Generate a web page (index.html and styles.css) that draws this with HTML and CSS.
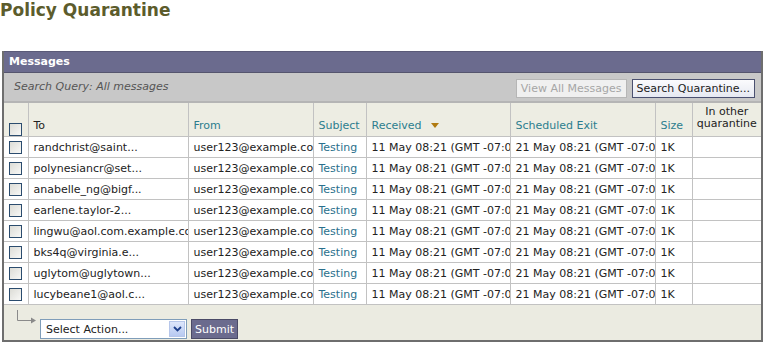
FILE: index.html
```html
<!DOCTYPE html>
<html lang="en">
<head>
    <meta charset="UTF-8">
    <title>Policy Quarantine</title>
    <link rel="stylesheet" href="styles.css">
</head>
<body>
    <h1 class="page-title">Policy Quarantine</h1>

    <div class="panel">
        <div class="panel-head">Messages</div>
        <div class="search-bar">
            <span class="search-query">Search Query: All messages</span>
            <div class="search-buttons">
                <button class="btn btn-disabled" disabled>View All Messages</button>
                <button class="btn">Search Quarantine...</button>
            </div>
        </div>

        <table class="msg-table">
            <colgroup>
                <col class="c-check">
                <col class="c-to">
                <col class="c-from">
                <col class="c-subject">
                <col class="c-received">
                <col class="c-exit">
                <col class="c-size">
                <col class="c-other">
            </colgroup>
            <thead>
                <tr>
                    <th><input type="checkbox" class="cb"></th>
                    <th class="plain">To</th>
                    <th>From</th>
                    <th>Subject</th>
                    <th>Received <span class="sort-arrow"></span></th>
                    <th>Scheduled Exit</th>
                    <th>Size</th>
                    <th class="other">In other quarantine</th>
                </tr>
            </thead>
            <tbody>
                <tr><td><input type="checkbox" class="cb"></td><td>randchrist@saint...</td><td>user123@example.com</td><td><a href="#">Testing</a></td><td>11 May 08:21 (GMT -07:00)</td><td>21 May 08:21 (GMT -07:00)</td><td>1K</td><td></td></tr>
                <tr><td><input type="checkbox" class="cb"></td><td>polynesiancr@set...</td><td>user123@example.com</td><td><a href="#">Testing</a></td><td>11 May 08:21 (GMT -07:00)</td><td>21 May 08:21 (GMT -07:00)</td><td>1K</td><td></td></tr>
                <tr><td><input type="checkbox" class="cb"></td><td>anabelle_ng@bigf...</td><td>user123@example.com</td><td><a href="#">Testing</a></td><td>11 May 08:21 (GMT -07:00)</td><td>21 May 08:21 (GMT -07:00)</td><td>1K</td><td></td></tr>
                <tr><td><input type="checkbox" class="cb"></td><td>earlene.taylor-2...</td><td>user123@example.com</td><td><a href="#">Testing</a></td><td>11 May 08:21 (GMT -07:00)</td><td>21 May 08:21 (GMT -07:00)</td><td>1K</td><td></td></tr>
                <tr><td><input type="checkbox" class="cb"></td><td>lingwu@aol.com.example.com</td><td>user123@example.com</td><td><a href="#">Testing</a></td><td>11 May 08:21 (GMT -07:00)</td><td>21 May 08:21 (GMT -07:00)</td><td>1K</td><td></td></tr>
                <tr><td><input type="checkbox" class="cb"></td><td>bks4q@virginia.e...</td><td>user123@example.com</td><td><a href="#">Testing</a></td><td>11 May 08:21 (GMT -07:00)</td><td>21 May 08:21 (GMT -07:00)</td><td>1K</td><td></td></tr>
                <tr><td><input type="checkbox" class="cb"></td><td>uglytom@uglytown...</td><td>user123@example.com</td><td><a href="#">Testing</a></td><td>11 May 08:21 (GMT -07:00)</td><td>21 May 08:21 (GMT -07:00)</td><td>1K</td><td></td></tr>
                <tr><td><input type="checkbox" class="cb"></td><td>lucybeane1@aol.c...</td><td>user123@example.com</td><td><a href="#">Testing</a></td><td>11 May 08:21 (GMT -07:00)</td><td>21 May 08:21 (GMT -07:00)</td><td>1K</td><td></td></tr>
            </tbody>
        </table>

        <div class="panel-foot">
            <svg class="corner-arrow" width="22" height="14" viewBox="0 0 22 14">
                <path d="M1.5 0 V10.5 H16" fill="none" stroke="#8a8a8a" stroke-width="1"/>
                <path d="M15 7.5 L20 10.5 L15 13.5 Z" fill="#8a8a8a"/>
            </svg>
            <div class="select-box">
                <span>Select Action...</span>
                <span class="select-arrow">
                    <svg width="9" height="6" viewBox="0 0 9 6"><path d="M1 1 L4.5 4.5 L8 1" fill="none" stroke="#1d3f8c" stroke-width="1.8"/></svg>
                </span>
            </div>
            <button class="submit-btn">Submit</button>
        </div>
    </div>
</body>
</html>
```

FILE: styles.css
```css
body {
    margin: 0;
    font-family: "DejaVu Sans", Verdana, sans-serif;
    font-size: 11px;
    color: #222;
    background: #fff;
}

.page-title {
    margin: 0;
    padding: 1px 0 0 0;
    height: 51px;
    box-sizing: border-box;
    font-size: 17px;
    line-height: 18px;
    font-weight: bold;
    color: #5c5c2c;
}

.panel {
    margin: 0 2px;
    border: 2px solid #6e6e6e;
    border-top: none;
    width: 757px;
}

.panel-head {
    height: 20px;
    line-height: 20px;
    padding-left: 5px;
    background: #6b6b8e;
    color: #fff;
    font-weight: bold;
    border-top: 1px solid #5a5a78;
    border-bottom: 1px solid #55556e;
}

.search-bar {
    display: flex;
    justify-content: space-between;
    align-items: center;
    height: 28px;
    padding: 0 6px 0 10px;
    background: #c8c8c8;
}

.search-query {
    font-style: italic;
    color: #555;
    position: relative;
    top: -1px;
}

.search-buttons {
    display: flex;
    gap: 5px;
    padding-top: 3px;
}

.btn {
    font-family: "DejaVu Sans", Verdana, sans-serif;
    font-size: 11px;
    height: 19px;
    padding: 0 4px;
    background: linear-gradient(#fbfbfd, #e6e9f2);
    border: 1px solid #4a5070;
    color: #222;
}

.btn-disabled {
    color: #a6a6a6;
    border-color: #b6b6b6;
    background: #f0f0f0;
}

.msg-table {
    width: 757px;
    table-layout: fixed;
    border-collapse: collapse;
    border-top: 2px solid #b5b5b5;
    font-size: 11px;
}

.c-check { width: 24px; }
.c-to { width: 160px; }
.c-from { width: 125px; }
.c-subject { width: 53px; }
.c-received { width: 144px; }
.c-exit { width: 145px; }
.c-size { width: 37px; }
.c-other { width: 69px; }

.msg-table th,
.msg-table td {
    border: 1px solid #c2c2c2;
    white-space: nowrap;
    overflow: hidden;
    text-align: left;
    font-weight: normal;
    padding: 0 5px;
}

.msg-table th:first-child,
.msg-table td:first-child {
    border-left: none;
    padding: 0 0 0 5px;
}

.msg-table th:last-child,
.msg-table td:last-child {
    border-right: none;
}

.msg-table th {
    height: 29px;
    background: #ededE3;
    color: #2c7d8e;
    vertical-align: bottom;
    padding-bottom: 4px;
}

.msg-table th.plain {
    color: #222;
}

.msg-table th.other {
    white-space: normal;
    text-align: center;
    vertical-align: top;
    color: #222;
    padding: 3px 2px 0 2px;
    line-height: 12px;
}

.msg-table td {
    height: 20px;
    background: #fff;
    line-height: 13px;
}

.msg-table a {
    color: #2a6f8c;
    text-decoration: none;
}

.sort-arrow {
    display: inline-block;
    width: 0;
    height: 0;
    margin-left: 6px;
    border-left: 4px solid transparent;
    border-right: 4px solid transparent;
    border-top: 5px solid #b07a10;
    vertical-align: 1px;
}

.cb {
    appearance: none;
    width: 13px;
    height: 13px;
    margin: 0;
    border: 1px solid #2b4c6e;
    background: linear-gradient(135deg, #dcdcd6, #f8f8f6);
    vertical-align: middle;
    box-sizing: border-box;
}

.panel-foot {
    display: flex;
    align-items: flex-start;
    height: 35px;
    background: #ebebe1;
    padding-left: 12px;
}

.corner-arrow {
    margin-top: 5px;
    margin-right: 2px;
}

.select-box {
    display: flex;
    justify-content: space-between;
    align-items: center;
    margin-top: 14px;
    width: 140px;
    height: 18px;
    border: 1px solid #7f9db9;
    background: #fff;
    padding-left: 5px;
    color: #222;
}

.select-arrow {
    display: flex;
    align-items: center;
    justify-content: center;
    width: 14px;
    height: 14px;
    margin-right: 1px;
    background: linear-gradient(#dde6fb, #b7c9f1);
    border: 1px solid #b6c6ea;
}

.submit-btn {
    margin-top: 14px;
    margin-left: 4px;
    height: 20px;
    padding: 0 3px;
    font-family: "DejaVu Sans", Verdana, sans-serif;
    font-size: 11px;
    color: #fff;
    background: #6b6b8e;
    border: 1px solid #4a4a66;
}
```
